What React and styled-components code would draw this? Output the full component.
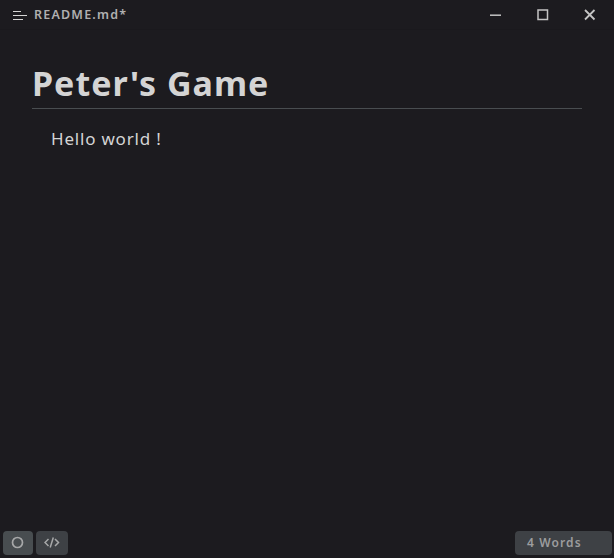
import React from "react";
import styled, { createGlobalStyle } from "styled-components";

const GlobalStyle = createGlobalStyle`
  * { box-sizing: border-box; }
  body { margin: 0; background: #1c1b1f; }
`;
const Window = styled.div`
  height: 100vh;
  display: flex;
  flex-direction: column;
  overflow: hidden;
  background: #1c1b1f;
  color: #d4d4d4;
  font-family: "Noto Sans", "Open Sans", sans-serif;
`;
const TitleBar = styled.header`
  height: 30px;
  flex: none;
  display: flex;
  align-items: center;
  padding-left: 13px;
  border-bottom: 1px solid #1a191d;
`;
const FileName = styled.span`
  flex: 1;
  margin-left: 7px;
  font-size: 12.5px;
  line-height: 28px;
  font-weight: 600;
  letter-spacing: 1.2px;
  color: #b0b0b0;
`;
const WindowButton = styled.button`
  width: 47px;
  height: 29px;
  padding: 0;
  border: 0;
  background: none;
  color: #c4c4c4;
  display: grid;
  place-items: center;
`;
const Controls = styled.div`
  display: flex;
  padding-right: 1px;
`;
const Document = styled.main`
  flex: 1;
  padding: 34px 32px 0;
`;
const Title = styled.h1`
  margin: 0;
  height: 45px;
  border-bottom: 1px solid #494d50;
  font-size: 34px;
  line-height: 39px;
  font-weight: 700;
  letter-spacing: 1px;
  white-space: nowrap;
`;
const Paragraph = styled.p`
  margin: 17px 0 0 19px;
  font-size: 17px;
  line-height: 26px;
  letter-spacing: 0.8px;
`;
const StatusBar = styled.footer`
  flex: none;
  display: flex;
  gap: 3px;
  padding: 0 2px 3px 3px;
`;
const Tool = styled.button`
  width: ${(p) => p.$width}px;
  height: 24px;
  padding: 0;
  border: 0;
  border-radius: 4px;
  background: ${(p) => (p.$active ? "#484d50" : "#3e4145")};
  color: #a7a8a9;
  display: grid;
  place-items: center;
`;
const WordCount = styled.div`
  width: 97px;
  height: 24px;
  margin-left: auto;
  padding-left: 12px;
  border-radius: 4px;
  background: #3e4145;
  color: #9c9d9e;
  font-size: 12px;
  line-height: 23px;
  font-weight: 600;
  letter-spacing: 1.1px;
`;
const Icon = styled.svg`
  display: block;
  flex: none;
  fill: none;
  stroke: currentColor;
  stroke-width: ${(p) => p.$weight || 1.5};
`;

export default function App() {
  return (
    <Window>
      <GlobalStyle />
      <TitleBar>
        <Icon width="14" height="13" $weight={1}>
          <path d="M0 3.5h8M0 7.5h14M0 11.5h10" />
        </Icon>
        <FileName>README.md*</FileName>
        <Controls>
          <WindowButton aria-label="Minimize">
            <Icon width="13" height="13"><path d="M1 7.2h11" /></Icon>
          </WindowButton>
          <WindowButton aria-label="Maximize">
            <Icon width="13" height="13"><rect x="2" y="2" width="9.5" height="9.5" /></Icon>
          </WindowButton>
          <WindowButton aria-label="Close">
            <Icon width="13" height="13" $weight={1.8}><path d="M2 2l9.5 9.5M11.5 2L2 11.5" /></Icon>
          </WindowButton>
        </Controls>
      </TitleBar>
      <Document>
        <Title>Peter's Game</Title>
        <Paragraph>Hello world !</Paragraph>
      </Document>
      <StatusBar>
        <Tool $width={30} $active aria-label="Focus mode">
          <Icon width="14" height="14" $weight={1.7}><circle cx="6.5" cy="6.5" r="5" /></Icon>
        </Tool>
        <Tool $width={32} aria-label="Source mode">
          <Icon width="16" height="12"><path d="M4.5 2L1 5.5 4.5 9M11 2l3.5 3.5L11 9M9.3 0.5L6.2 10.5" /></Icon>
        </Tool>
        <WordCount>4 Words</WordCount>
      </StatusBar>
    </Window>
  );
}
